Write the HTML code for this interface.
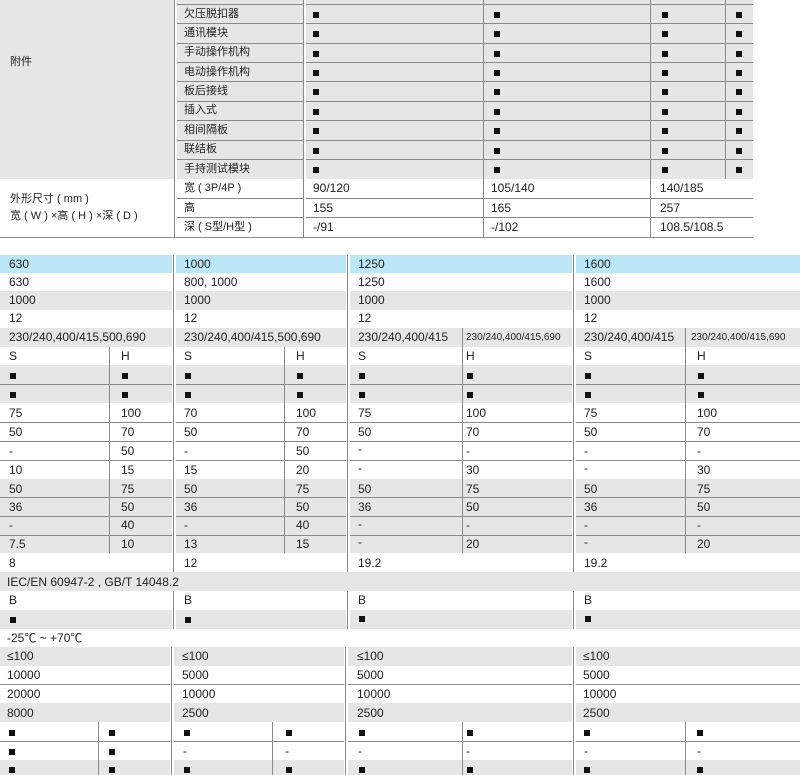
<!DOCTYPE html>
<html><head><meta charset="utf-8"><style>
*{margin:0;padding:0}
body{width:800px;height:775px;position:relative;overflow:hidden;background:#fff;font:12px "Liberation Sans","Noto Sans CJK SC",sans-serif;color:#222}
div{position:absolute}
.g{background:#e6e6e6}
.b{background:#bde6f7}
.h{height:1px;background:#8a8a8a}
.v{width:1px;background:#8a8a8a}
.w{width:2px;background:#fff}
span{position:absolute;white-space:nowrap;line-height:13px}
.c{font-size:11px}
.s{font-size:10px}
.sq{display:inline-block;width:6px;height:6px;background:#111;position:absolute}
</style></head><body>
<!-- TOP TABLE -->
<div class="g" style="left:0;top:0;width:753px;height:179px"></div>
<div class="h" style="left:174px;top:4px;width:579px"></div>
<div class="h" style="left:174px;top:23px;width:579px"></div>
<div class="h" style="left:174px;top:43px;width:579px"></div>
<div class="h" style="left:174px;top:62px;width:579px"></div>
<div class="h" style="left:174px;top:81px;width:579px"></div>
<div class="h" style="left:174px;top:101px;width:579px"></div>
<div class="h" style="left:174px;top:120px;width:579px"></div>
<div class="h" style="left:174px;top:140px;width:579px"></div>
<div class="h" style="left:174px;top:159px;width:579px"></div>
<div class="h" style="left:174px;top:198px;width:579px"></div>
<div class="h" style="left:174px;top:217px;width:579px"></div>
<div class="h" style="left:0;top:237px;width:753px"></div>
<div class="w" style="left:175px;top:0;height:237px"></div>
<div class="v" style="left:174px;top:0;height:237px"></div>
<div class="w" style="left:304px;top:0;height:237px"></div>
<div class="v" style="left:303px;top:0;height:237px"></div>
<div class="v" style="left:483px;top:0;height:237px"></div>
<div class="v" style="left:650px;top:0;height:237px"></div>
<div class="v" style="left:725px;top:0;height:179px"></div>
<span class="c" style="left:10px;top:56px">附件</span>
<span class="c" style="left:10px;top:193px">外形尺寸 ( mm )</span>
<span class="c" style="left:10px;top:210px">宽 ( W ) ×高 ( H ) ×深 ( D )</span>
<span class="c" style="left:184px;top:8px">欠压脱扣器</span>
<span class="c" style="left:184px;top:27px">通讯模块</span>
<span class="c" style="left:184px;top:46px">手动操作机构</span>
<span class="c" style="left:184px;top:66px">电动操作机构</span>
<span class="c" style="left:184px;top:85px">板后接线</span>
<span class="c" style="left:184px;top:104px">插入式</span>
<span class="c" style="left:184px;top:124px">相间隔板</span>
<span class="c" style="left:184px;top:143px">联结板</span>
<span class="c" style="left:184px;top:163px">手持测试模块</span>
<span class="c" style="left:184px;top:182px">宽 ( 3P/4P )</span>
<span class="c" style="left:184px;top:202px">高</span>
<span class="c" style="left:184px;top:221px">深 ( S型/H型 )</span>
<i class="sq" style="left:313px;top:12px"></i><i class="sq" style="left:494px;top:12px"></i><i class="sq" style="left:662px;top:12px"></i><i class="sq" style="left:736px;top:12px"></i>
<i class="sq" style="left:313px;top:31px"></i><i class="sq" style="left:494px;top:31px"></i><i class="sq" style="left:662px;top:31px"></i><i class="sq" style="left:736px;top:31px"></i>
<i class="sq" style="left:313px;top:51px"></i><i class="sq" style="left:494px;top:51px"></i><i class="sq" style="left:662px;top:51px"></i><i class="sq" style="left:736px;top:51px"></i>
<i class="sq" style="left:313px;top:70px"></i><i class="sq" style="left:494px;top:70px"></i><i class="sq" style="left:662px;top:70px"></i><i class="sq" style="left:736px;top:70px"></i>
<i class="sq" style="left:313px;top:89px"></i><i class="sq" style="left:494px;top:89px"></i><i class="sq" style="left:662px;top:89px"></i><i class="sq" style="left:736px;top:89px"></i>
<i class="sq" style="left:313px;top:109px"></i><i class="sq" style="left:494px;top:109px"></i><i class="sq" style="left:662px;top:109px"></i><i class="sq" style="left:736px;top:109px"></i>
<i class="sq" style="left:313px;top:128px"></i><i class="sq" style="left:494px;top:128px"></i><i class="sq" style="left:662px;top:128px"></i><i class="sq" style="left:736px;top:128px"></i>
<i class="sq" style="left:313px;top:148px"></i><i class="sq" style="left:494px;top:148px"></i><i class="sq" style="left:662px;top:148px"></i><i class="sq" style="left:736px;top:148px"></i>
<i class="sq" style="left:313px;top:167px"></i><i class="sq" style="left:494px;top:167px"></i><i class="sq" style="left:662px;top:167px"></i><i class="sq" style="left:736px;top:167px"></i>
<span style="left:313px;top:182px">90/120</span><span style="left:491px;top:182px">105/140</span><span style="left:660px;top:182px">140/185</span>
<span style="left:313px;top:202px">155</span><span style="left:491px;top:202px">165</span><span style="left:660px;top:202px">257</span>
<span style="left:313px;top:221px">-/91</span><span style="left:491px;top:221px">-/102</span><span style="left:660px;top:221px">108.5/108.5</span>

<!-- BOTTOM TABLE backgrounds -->
<div class="b" style="left:0;top:255px;width:800px;height:18px"></div>
<div class="g" style="left:0;top:291px;width:800px;height:19px"></div>
<div class="g" style="left:0;top:328px;width:800px;height:19px"></div>
<div class="g" style="left:0;top:365px;width:800px;height:38px"></div>
<div class="g" style="left:0;top:479px;width:800px;height:74px"></div>
<div class="g" style="left:0;top:572px;width:800px;height:19px"></div>
<div class="g" style="left:0;top:610px;width:800px;height:19px"></div>
<div class="g" style="left:0;top:647px;width:800px;height:19px"></div>
<div class="g" style="left:0;top:703px;width:800px;height:19px"></div>
<div class="g" style="left:0;top:760px;width:800px;height:15px"></div>
<!-- horizontal lines -->
<div class="h" style="left:0;top:384px;width:800px"></div>
<div class="h" style="left:0;top:422px;width:800px"></div>
<div class="h" style="left:0;top:441px;width:800px"></div>
<div class="h" style="left:0;top:460px;width:800px"></div>
<div class="h" style="left:0;top:497px;width:800px"></div>
<div class="h" style="left:0;top:516px;width:800px"></div>
<div class="h" style="left:0;top:535px;width:800px"></div>
<div class="h" style="left:0;top:684px;width:800px"></div>
<div class="h" style="left:0;top:741px;width:800px"></div>
<!-- vertical lines -->
<div class="w" style="left:172px;top:255px;height:317px"></div><div class="v" style="left:173px;top:255px;height:317px"></div><div class="w" style="left:174px;top:255px;height:317px"></div>
<div class="w" style="left:346px;top:255px;height:317px"></div><div class="v" style="left:347px;top:255px;height:317px"></div><div class="w" style="left:348px;top:255px;height:317px"></div>
<div class="w" style="left:572px;top:255px;height:317px"></div><div class="v" style="left:573px;top:255px;height:317px"></div><div class="w" style="left:574px;top:255px;height:317px"></div>
<div class="w" style="left:172px;top:591px;height:38px"></div><div class="v" style="left:173px;top:591px;height:38px"></div><div class="w" style="left:174px;top:591px;height:38px"></div>
<div class="w" style="left:346px;top:591px;height:38px"></div><div class="v" style="left:347px;top:591px;height:38px"></div><div class="w" style="left:348px;top:591px;height:38px"></div>
<div class="w" style="left:572px;top:591px;height:38px"></div><div class="v" style="left:573px;top:591px;height:38px"></div><div class="w" style="left:574px;top:591px;height:38px"></div>
<div class="w" style="left:170px;top:647px;height:128px"></div><div class="v" style="left:171px;top:647px;height:128px"></div><div class="w" style="left:172px;top:647px;height:128px"></div>
<div class="w" style="left:344px;top:647px;height:128px"></div><div class="v" style="left:345px;top:647px;height:128px"></div><div class="w" style="left:346px;top:647px;height:128px"></div>
<div class="w" style="left:572px;top:647px;height:128px"></div><div class="v" style="left:573px;top:647px;height:128px"></div><div class="w" style="left:574px;top:647px;height:128px"></div>
<div class="v" style="left:109px;top:347px;height:206px"></div>
<div class="v" style="left:284px;top:347px;height:206px"></div>
<div class="v" style="left:462px;top:328px;height:225px"></div>
<div class="v" style="left:685px;top:328px;height:225px"></div>
<div class="v" style="left:98px;top:722px;height:53px"></div>
<div class="v" style="left:272px;top:722px;height:53px"></div>
<div class="v" style="left:462px;top:722px;height:53px"></div>
<div class="v" style="left:685px;top:722px;height:53px"></div>

<!-- bottom text -->
<span style="left:9px;top:258px">630</span><span style="left:184px;top:258px">1000</span><span style="left:358px;top:258px">1250</span><span style="left:584px;top:258px">1600</span>
<span style="left:9px;top:276px">630</span><span style="left:184px;top:276px">800, 1000</span><span style="left:358px;top:276px">1250</span><span style="left:584px;top:276px">1600</span>
<span style="left:9px;top:294px">1000</span><span style="left:184px;top:294px">1000</span><span style="left:358px;top:294px">1000</span><span style="left:584px;top:294px">1000</span>
<span style="left:9px;top:312px">12</span><span style="left:184px;top:312px">12</span><span style="left:358px;top:312px">12</span><span style="left:584px;top:312px">12</span>
<span style="left:9px;top:331px">230/240,400/415,500,690</span><span style="left:184px;top:331px">230/240,400/415,500,690</span><span style="left:358px;top:331px">230/240,400/415</span><span class="s" style="left:466px;top:331px">230/240,400/415,690</span><span style="left:584px;top:331px">230/240,400/415</span><span class="s" style="left:691px;top:331px">230/240,400/415,690</span>
<span style="left:9px;top:350px">S</span><span style="left:121px;top:350px">H</span><span style="left:184px;top:350px">S</span><span style="left:296px;top:350px">H</span><span style="left:358px;top:350px">S</span><span style="left:466px;top:350px">H</span><span style="left:584px;top:350px">S</span><span style="left:697px;top:350px">H</span>
<i class="sq" style="left:10px;top:373px"></i><i class="sq" style="left:122px;top:373px"></i><i class="sq" style="left:185px;top:373px"></i><i class="sq" style="left:297px;top:373px"></i><i class="sq" style="left:359px;top:373px"></i><i class="sq" style="left:467px;top:373px"></i><i class="sq" style="left:585px;top:373px"></i><i class="sq" style="left:698px;top:373px"></i>
<i class="sq" style="left:10px;top:392px"></i><i class="sq" style="left:122px;top:392px"></i><i class="sq" style="left:185px;top:392px"></i><i class="sq" style="left:297px;top:392px"></i><i class="sq" style="left:359px;top:392px"></i><i class="sq" style="left:467px;top:392px"></i><i class="sq" style="left:585px;top:392px"></i><i class="sq" style="left:698px;top:392px"></i>
<span style="left:9px;top:407px">75</span><span style="left:121px;top:407px">100</span><span style="left:184px;top:407px">70</span><span style="left:296px;top:407px">100</span><span style="left:358px;top:407px">75</span><span style="left:466px;top:407px">100</span><span style="left:584px;top:407px">75</span><span style="left:697px;top:407px">100</span>
<span style="left:9px;top:426px">50</span><span style="left:121px;top:426px">70</span><span style="left:184px;top:426px">50</span><span style="left:296px;top:426px">70</span><span style="left:358px;top:426px">50</span><span style="left:466px;top:426px">70</span><span style="left:584px;top:426px">50</span><span style="left:697px;top:426px">70</span>
<span style="left:9px;top:445px">-</span><span style="left:121px;top:445px">50</span><span style="left:184px;top:445px">-</span><span style="left:296px;top:445px">50</span><span style="left:358px;top:443px">-</span><span style="left:466px;top:445px">-</span><span style="left:584px;top:445px">-</span><span style="left:697px;top:445px">-</span>
<span style="left:9px;top:464px">10</span><span style="left:121px;top:464px">15</span><span style="left:184px;top:464px">15</span><span style="left:296px;top:464px">20</span><span style="left:358px;top:462px">-</span><span style="left:466px;top:464px">30</span><span style="left:584px;top:462px">-</span><span style="left:697px;top:464px">30</span>
<span style="left:9px;top:483px">50</span><span style="left:121px;top:483px">75</span><span style="left:184px;top:483px">50</span><span style="left:296px;top:483px">75</span><span style="left:358px;top:483px">50</span><span style="left:466px;top:483px">75</span><span style="left:584px;top:483px">50</span><span style="left:697px;top:483px">75</span>
<span style="left:9px;top:501px">36</span><span style="left:121px;top:501px">50</span><span style="left:184px;top:501px">36</span><span style="left:296px;top:501px">50</span><span style="left:358px;top:501px">36</span><span style="left:466px;top:501px">50</span><span style="left:584px;top:501px">36</span><span style="left:697px;top:501px">50</span>
<span style="left:9px;top:519px">-</span><span style="left:121px;top:519px">40</span><span style="left:184px;top:519px">-</span><span style="left:296px;top:519px">40</span><span style="left:358px;top:518px">-</span><span style="left:466px;top:519px">-</span><span style="left:584px;top:519px">-</span><span style="left:697px;top:519px">-</span>
<span style="left:9px;top:538px">7.5</span><span style="left:121px;top:538px">10</span><span style="left:184px;top:538px">13</span><span style="left:296px;top:538px">15</span><span style="left:358px;top:536px">-</span><span style="left:466px;top:538px">20</span><span style="left:584px;top:536px">-</span><span style="left:697px;top:538px">20</span>
<span style="left:9px;top:557px">8</span><span style="left:184px;top:557px">12</span><span style="left:358px;top:557px">19.2</span><span style="left:584px;top:557px">19.2</span>
<span style="left:7px;top:576px">IEC/EN 60947-2 , GB/T 14048.2</span>
<span style="left:9px;top:594px">B</span><span style="left:184px;top:594px">B</span><span style="left:358px;top:594px">B</span><span style="left:584px;top:594px">B</span>
<i class="sq" style="left:10px;top:617px"></i><i class="sq" style="left:185px;top:617px"></i><i class="sq" style="left:359px;top:616px"></i><i class="sq" style="left:585px;top:616px"></i>
<span style="left:7px;top:632px">-25℃ ~ +70℃</span>
<span style="left:7px;top:650px">≤100</span><span style="left:182px;top:650px">≤100</span><span style="left:357px;top:650px">≤100</span><span style="left:583px;top:650px">≤100</span>
<span style="left:7px;top:669px">10000</span><span style="left:182px;top:669px">5000</span><span style="left:357px;top:669px">5000</span><span style="left:583px;top:669px">5000</span>
<span style="left:7px;top:688px">20000</span><span style="left:182px;top:688px">10000</span><span style="left:357px;top:688px">10000</span><span style="left:583px;top:688px">10000</span>
<span style="left:7px;top:707px">8000</span><span style="left:182px;top:707px">2500</span><span style="left:357px;top:707px">2500</span><span style="left:583px;top:707px">2500</span>
<i class="sq" style="left:9px;top:730px"></i><i class="sq" style="left:109px;top:730px"></i><i class="sq" style="left:184px;top:730px"></i><i class="sq" style="left:286px;top:730px"></i><i class="sq" style="left:359px;top:730px"></i><i class="sq" style="left:467px;top:730px"></i><i class="sq" style="left:584px;top:730px"></i><i class="sq" style="left:697px;top:730px"></i>
<i class="sq" style="left:9px;top:749px"></i><i class="sq" style="left:109px;top:749px"></i><span style="left:183px;top:745px">-</span><span style="left:285px;top:745px">-</span><span style="left:358px;top:745px">-</span><span style="left:466px;top:745px">-</span><span style="left:584px;top:745px">-</span><span style="left:697px;top:745px">-</span>
<i class="sq" style="left:9px;top:767px"></i><i class="sq" style="left:109px;top:767px"></i><i class="sq" style="left:184px;top:767px"></i><i class="sq" style="left:286px;top:767px"></i><i class="sq" style="left:359px;top:767px"></i><i class="sq" style="left:467px;top:767px"></i><i class="sq" style="left:584px;top:767px"></i><i class="sq" style="left:697px;top:767px"></i>
</body></html>
